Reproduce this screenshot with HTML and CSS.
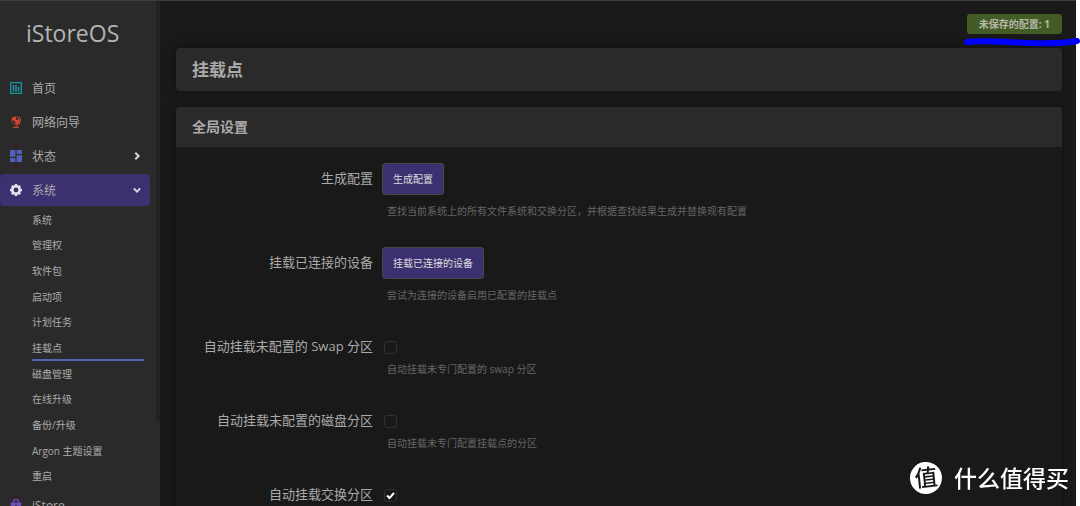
FILE: index.html
```html
<!DOCTYPE html>
<html lang="zh-CN">
<head>
<meta charset="utf-8">
<title>iStoreOS - 挂载点</title>
<link rel="stylesheet" href="styles.css">
</head>
<body>
<div class="app">
  <aside class="sidebar">
    <a class="brand" href="#">iStoreOS</a>
    <nav class="menu">
      <a class="menu-item" href="#">
        <svg class="icon teal" viewBox="0 0 12 12"><path fill="none" stroke="currentColor" stroke-width="1.300" d="M.7.7h10.600v10.600H.7z"/><path fill="none" stroke="currentColor" stroke-width="1.500" d="M3.500 3v6.500M6 3v6.500M8.500 5v4.500"/></svg>
        <span>首页</span>
      </a>
      <a class="menu-item" href="#">
        <svg class="icon red" viewBox="0 0 12 12"><circle cx="5.500" cy="4.600" r="4.100" fill="currentColor"/><path d="M2 4.200l2.600.9 1 1.900-.6 1.400L2.600 7zM6 1.200l2.700 1.300-1.300 1.700L5.700 3z" fill="#2a2a2a"/><path d="M9.200.8a5.400 5.400 0 0 1-.6 7.800L6 9.800v1.600M3 11.400h6" fill="none" stroke="currentColor" stroke-width="1"/></svg>
        <span>网络向导</span>
      </a>
      <a class="menu-item" href="#">
        <svg class="icon indigo" viewBox="0 0 12 12"><path fill="currentColor" d="M0 0h5.400v6.700H0zM6.600 0H12v4H6.600zM0 8h5.400v4H0zM6.600 5.300H12V12H6.600z"/></svg>
        <span>状态</span>
        <svg class="arrow" viewBox="0 0 8 8"><path d="M2.300.8L5.600 4 2.300 7.200"/></svg>
      </a>
      <a class="menu-item active" href="#">
        <svg class="icon" viewBox="0 0 12 12"><circle cx="6" cy="6" r="3.700" fill="none" stroke="currentColor" stroke-width="2.600"/><path stroke="currentColor" stroke-width="2.400" d="M6 0v2M6 10v2M0 6h2M10 6h2M1.800 1.800l1.400 1.400M8.800 8.800l1.400 1.400M1.800 10.200l1.400-1.400M8.800 3.200l1.400-1.400"/></svg>
        <span>系统</span>
        <svg class="arrow" viewBox="0 0 8 8"><path d="M.8 2.400L4 5.600l3.200-3.200"/></svg>
      </a>
    </nav>
    <nav class="submenu">
      <a href="#">系统</a>
      <a href="#">管理权</a>
      <a href="#">软件包</a>
      <a href="#">启动项</a>
      <a href="#">计划任务</a>
      <a class="current" href="#">挂载点</a>
      <a href="#">磁盘管理</a>
      <a href="#">在线升级</a>
      <a href="#">备份/升级</a>
      <a href="#">Argon 主题设置</a>
      <a href="#">重启</a>
    </nav>
    <nav class="menu">
      <a class="menu-item" href="#">
        <svg class="icon purple" viewBox="0 0 12 12"><path fill="none" stroke="currentColor" stroke-width="1.400" d="M3.500 4V3a2.500 2.500 0 0 1 5 0v1"/><path fill="currentColor" d="M.5 3.600h11L10.500 12h-9z"/><circle cx="6" cy="7.500" r="1.500" fill="#2a2a2a"/></svg>
        <span>iStore</span>
      </a>
    </nav>
    <div class="scroll-thumb"></div>
  </aside>

  <main class="main">
    <header class="topbar">
      <button class="badge" type="button">未保存的配置: 1</button>
    </header>
    <section class="card title-card"><h1>挂载点</h1></section>
    <section class="card">
      <h2>全局设置</h2>
      <form class="fields">
        <div class="row">
          <label for="generate">生成配置</label>
          <div class="control">
            <button class="action" id="generate" type="button">生成配置</button>
            <p class="hint">查找当前系统上的所有文件系统和交换分区，并根据查找结果生成并替换现有配置</p>
          </div>
        </div>
        <div class="row">
          <label for="mount">挂载已连接的设备</label>
          <div class="control">
            <button class="action" id="mount" type="button">挂载已连接的设备</button>
            <p class="hint">尝试为连接的设备启用已配置的挂载点</p>
          </div>
        </div>
        <div class="row toggle">
          <label for="anon-swap">自动挂载未配置的 Swap 分区</label>
          <div class="control">
            <input id="anon-swap" type="checkbox">
            <p class="hint">自动挂载未专门配置的 swap 分区</p>
          </div>
        </div>
        <div class="row toggle">
          <label for="anon-mount">自动挂载未配置的磁盘分区</label>
          <div class="control">
            <input id="anon-mount" type="checkbox">
            <p class="hint">自动挂载未专门配置挂载点的分区</p>
          </div>
        </div>
        <div class="row toggle">
          <label for="auto-swap">自动挂载交换分区</label>
          <div class="control">
            <input id="auto-swap" type="checkbox" checked>
          </div>
        </div>
      </form>
    </section>
  </main>
</div>
<svg class="marker" viewBox="0 0 118 14"><path d="M4 8C20 6 36 8 54 8.500S92 11 114 7"/></svg>
<div class="watermark"><span class="seal">值</span><span>什么值得买</span></div>
</body>
</html>
```
FILE: styles.css
```css
* { box-sizing: border-box; }

body {
  margin: 0;
  background: #fff;
  color: #aaa;
  font-family: "Open Sans", "Noto Sans CJK SC", sans-serif;
  font-size: 13px;
}

a { color: inherit; text-decoration: none; }
button { font-family: inherit; }

.app {
  display: flex;
  height: 100vh;
  margin-right: 4px;
  overflow: hidden;
  background: #191919;
  border-top: 1px solid #3c3c3c;
}

.sidebar {
  position: relative;
  display: flex;
  flex: none;
  flex-direction: column;
  width: 160px;
  background: #2a2a2a;
}

.brand {
  padding: 16px 10px 22px 26px;
  color: #b4b4b4;
  font-size: 23px;
  line-height: 33px;
}

.menu {
  display: flex;
  flex-direction: column;
  gap: 2px;
  margin-right: 10px;
}

.menu-item {
  display: flex;
  align-items: center;
  height: 32px;
  padding: 0 9px 0 10px;
  gap: 10px;
  border-radius: 4px;
  font-size: 12px;
}

.menu-item.active { background: #3c3070; }

.icon { width: 12px; height: 12px; color: #e4e4ea; }
.icon.teal { color: #1c93a3; }
.icon.red { color: #d5482f; }
.icon.indigo { color: #555ebd; }
.icon.purple { color: #7048c0; }

.arrow {
  width: 8px;
  height: 8px;
  margin-left: auto;
  fill: none;
  stroke: #d8d8d8;
  stroke-width: 2;
}

.submenu {
  display: grid;
  flex: none;
  grid-auto-rows: 1fr;
  min-height: 282px;
  margin: 1px 16px 0 32px;
}

.submenu a {
  display: flex;
  align-items: center;
  font-size: 10px;
  line-height: 16px;
}

.submenu .current { box-shadow: inset 0 -2px #5560b8; }

.scroll-thumb {
  position: absolute;
  top: 0;
  right: 0;
  width: 4px;
  height: 421px;
  background: #222;
}

.main { flex: 1; min-width: 0; padding: 0 14px 0 16px; }

.topbar {
  display: flex;
  justify-content: flex-end;
  padding: 13px 0 14px;
}

.badge {
  height: 20px;
  padding: 0 12px 2px;
  border: 0;
  border-radius: 3px;
  background: #435b25;
  color: #b3b8a8;
  font-size: 10px;
  font-weight: 700;
}

.card {
  margin-bottom: 16px;
  border-radius: 4px;
  box-shadow: 0 0 8px rgba(0, 0, 0, .35);
  overflow: hidden;
}

.card h1, .card h2 {
  margin: 0;
  padding: 0 16px;
  background: #2a2a2a;
  font-weight: 700;
}

.card h1 { font-size: 17px; line-height: 43px; }
.card h2 { font-size: 14px; line-height: 40px; }

.fields {
  display: flex;
  flex-direction: column;
  gap: 28px;
  padding: 16px 0;
}

.row { display: flex; gap: 9px; }

.row label {
  flex: 0 0 197px;
  line-height: 30px;
  text-align: right;
}

.control { display: flex; flex: 1; flex-direction: column; align-items: flex-start; }

.action {
  height: 32px;
  padding: 0 10px 2px;
  border: 1px solid #4a4844;
  border-radius: 3px;
  background: #3c3070;
  color: #ddd;
  font-size: 10px;
}

.hint {
  margin: 8px 0 0 5px;
  color: #666;
  font-size: 10px;
  line-height: 16px;
}

.toggle .hint { margin-top: 7px; }

.toggle input {
  appearance: none;
  width: 13px;
  height: 13px;
  margin: 10px 0 0 2px;
  border: 1px solid #303030;
  border-radius: 3px;
  background: transparent;
}

.toggle input:checked {
  background: url("data:image/svg+xml,%3Csvg xmlns='http://www.w3.org/2000/svg' viewBox='0 0 11 11'%3E%3Cpath d='M2 5.500l2.500 2.500L9 3' fill='none' stroke='white' stroke-width='2'/%3E%3C/svg%3E");
}

.marker {
  position: fixed;
  top: 34px;
  right: -1px;
  width: 118px;
  height: 14px;
  fill: none;
  stroke: #00f;
  stroke-width: 6;
  stroke-linecap: round;
}

.watermark {
  position: fixed;
  right: 11px;
  bottom: 12px;
  display: flex;
  align-items: center;
  gap: 12px;
  color: #fff;
  font-size: 23px;
  font-weight: 500;
  line-height: 32px;
}

.seal {
  width: 32px;
  height: 32px;
  border-radius: 50%;
  background: #fff;
  color: #191919;
  line-height: 30px;
  text-align: center;
  transform: rotate(-6deg);
}
```
